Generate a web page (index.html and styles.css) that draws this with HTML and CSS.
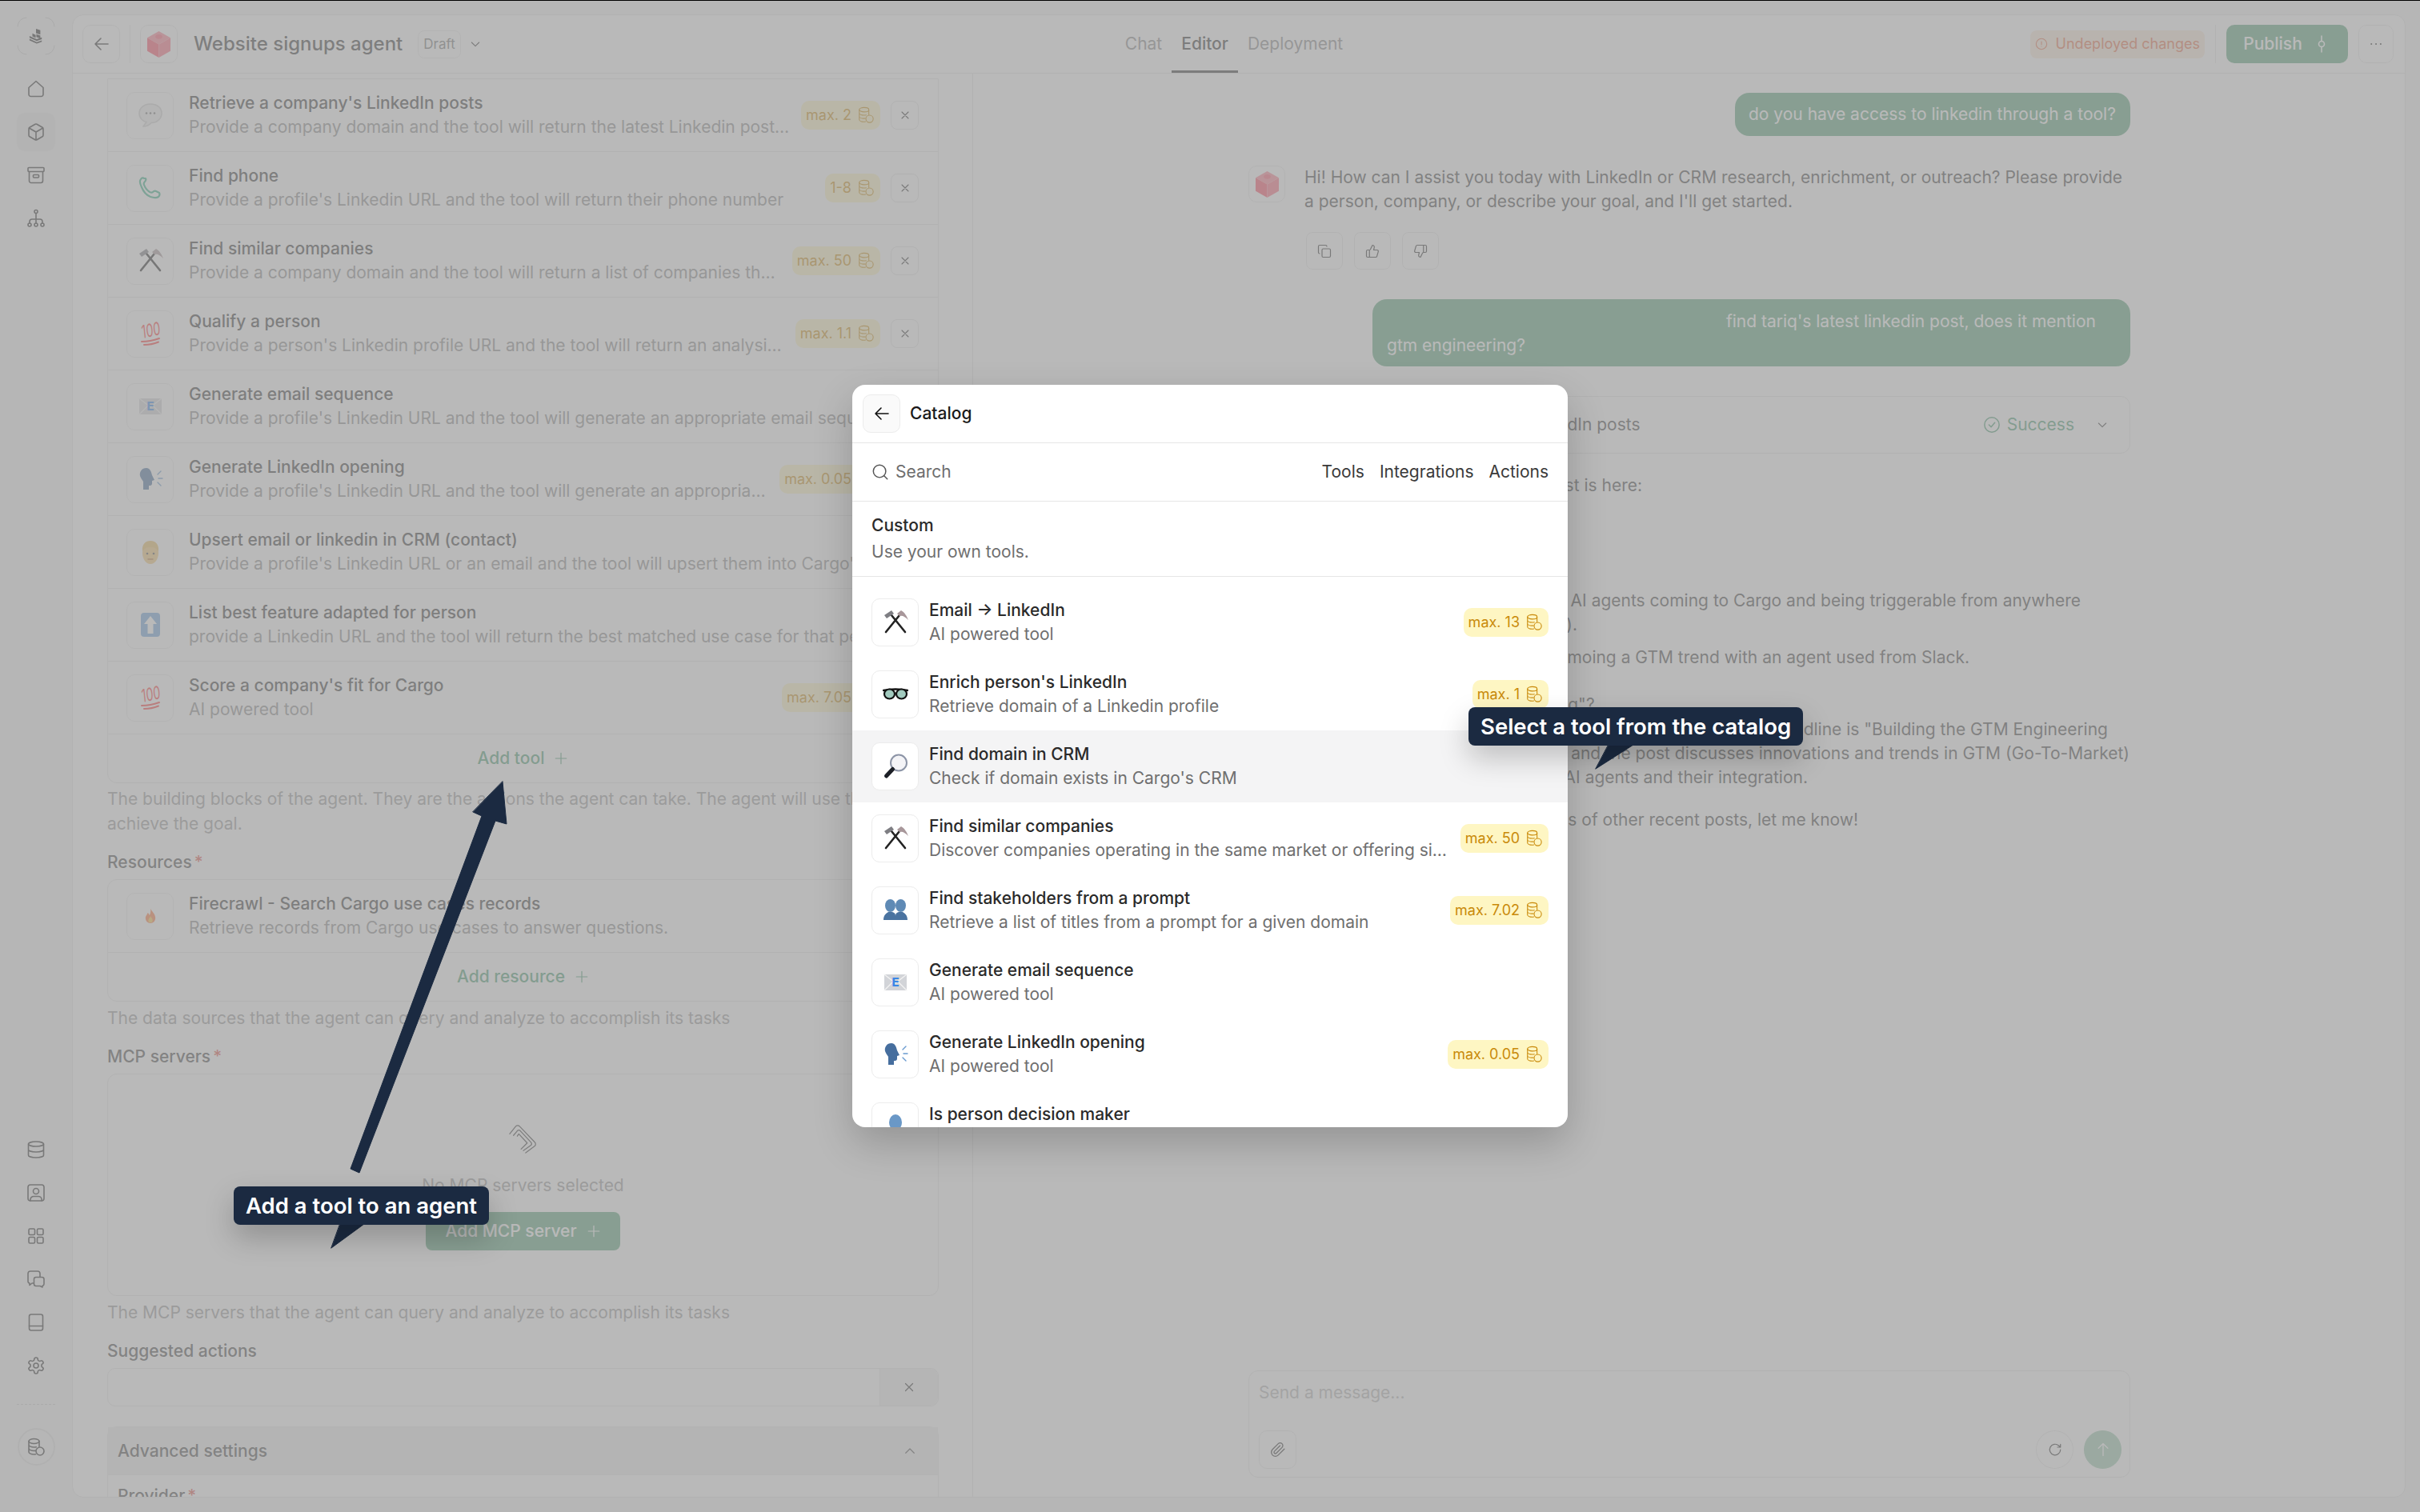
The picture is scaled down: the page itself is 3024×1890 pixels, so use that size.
FILE: index.html
```html
<!DOCTYPE html>
<html lang="en">
<head>
<meta charset="utf-8">
<title>Website signups agent</title>
<link rel="stylesheet" href="styles.css">
</head>
<body>
<svg class="defs" aria-hidden="true">
  <symbol id="back" viewBox="0 0 24 24"><path d="M20 12H4M11 19l-7-7 7-7"/></symbol>
  <symbol id="home" viewBox="0 0 24 24"><path d="M3 10.500 12 2.500l9 8V19a2.500 2.500 0 0 1-2.500 2.500h-13A2.500 2.500 0 0 1 3 19z"/></symbol>
  <symbol id="box" viewBox="0 0 24 24"><path d="M21 16V8a2 2 0 0 0-1-1.730l-7-4a2 2 0 0 0-2 0l-7 4A2 2 0 0 0 3 8v8a2 2 0 0 0 1 1.730l7 4a2 2 0 0 0 2 0l7-4A2 2 0 0 0 21 16zM3.300 7 12 12l8.700-5M12 22V12"/></symbol>
  <symbol id="archive" viewBox="0 0 24 24"><rect x="2" y="2.500" width="20" height="5" rx="1"/><path d="M3.500 7.500V19a2.500 2.500 0 0 0 2.500 2.500h12a2.500 2.500 0 0 0 2.500-2.500V7.500"/><rect x="8.500" y="11.500" width="7" height="3.500" rx="1"/></symbol>
  <symbol id="tree" viewBox="0 0 24 24"><circle cx="12" cy="3.500" r="2"/><circle cx="4" cy="20" r="2"/><circle cx="12" cy="20" r="2"/><circle cx="20" cy="20" r="2"/><path d="M12 5.500V18M4 18v-2a3 3 0 0 1 3-3h10a3 3 0 0 1 3 3v2"/></symbol>
  <symbol id="db" viewBox="0 0 24 24"><ellipse cx="12" cy="5" rx="9.500" ry="3"/><path d="M2.500 5v14c0 1.660 4.250 3 9.500 3s9.500-1.340 9.500-3V5M2.500 12c0 1.660 4.250 3 9.500 3s9.500-1.340 9.500-3"/></symbol>
  <symbol id="contact" viewBox="0 0 24 24"><rect x="2" y="2" width="20" height="20" rx="3"/><circle cx="12" cy="10" r="3.500"/><path d="M5 22v-1.500a4 4 0 0 1 4-4h6a4 4 0 0 1 4 4V22"/></symbol>
  <symbol id="grid" viewBox="0 0 24 24"><rect x="3" y="3" width="7.500" height="7.500" rx="1.500"/><rect x="13.500" y="3" width="7.500" height="7.500" rx="1.500"/><rect x="3" y="13.500" width="7.500" height="7.500" rx="1.500"/><rect x="13.500" y="13.500" width="7.500" height="7.500" rx="1.500"/></symbol>
  <symbol id="chats" viewBox="0 0 24 24"><path d="M9 17H7l-3 2.500V17a2.500 2.500 0 0 1-2-2.500V5a3 3 0 0 1 3-3h9a3 3 0 0 1 3 3v4"/><path d="M12 9.500h7.500A2.500 2.500 0 0 1 22 12v6a2.500 2.500 0 0 1-2 2.400V22l-3-1.500h-5A2.500 2.500 0 0 1 9.500 18v-6A2.500 2.500 0 0 1 12 9.500z"/></symbol>
  <symbol id="book" viewBox="0 0 24 24"><rect x="3.500" y="2" width="17" height="20" rx="2.500"/><path d="M3.500 16.500h17"/></symbol>
  <symbol id="gear" viewBox="0 0 24 24"><path d="M12.220 2h-.44a2 2 0 0 0-2 2v.18a2 2 0 0 1-1 1.730l-.43.25a2 2 0 0 1-2 0l-.15-.08a2 2 0 0 0-2.730.73l-.22.38a2 2 0 0 0 .73 2.730l.15.1a2 2 0 0 1 1 1.720v.51a2 2 0 0 1-1 1.740l-.15.09a2 2 0 0 0-.73 2.730l.22.38a2 2 0 0 0 2.730.73l.15-.08a2 2 0 0 1 2 0l.43.25a2 2 0 0 1 1 1.730V20a2 2 0 0 0 2 2h.44a2 2 0 0 0 2-2v-.18a2 2 0 0 1 1-1.730l.43-.25a2 2 0 0 1 2 0l.15.08a2 2 0 0 0 2.730-.73l.22-.39a2 2 0 0 0-.73-2.730l-.15-.08a2 2 0 0 1-1-1.740v-.5a2 2 0 0 1 1-1.740l.15-.09a2 2 0 0 0 .73-2.730l-.22-.38a2 2 0 0 0-2.730-.73l-.15.08a2 2 0 0 1-2 0l-.43-.25a2 2 0 0 1-1-1.730V4a2 2 0 0 0-2-2z"/><circle cx="12" cy="12" r="3"/></symbol>
  <symbol id="coins" viewBox="0 0 24 24"><ellipse cx="9.500" cy="4.500" rx="6.500" ry="3"/><path d="M3 4.500V18c0 1.600 2.900 3 6.500 3 .8 0 1.500-.1 2-.2M16 4.500v6.800M3 9c0 1.600 2.900 3 6.500 3 1 0 2-.1 2.800-.3M3 13.500c0 1.600 2.900 3 6.500 3 .6 0 1.200 0 1.700-.1"/><circle cx="17" cy="17" r="5"/></symbol>
  <symbol id="x" viewBox="0 0 24 24"><path d="M18 6 6 18M6 6l12 12"/></symbol>
  <symbol id="plus" viewBox="0 0 24 24"><path d="M12 3v18M3 12h18"/></symbol>
  <symbol id="down" viewBox="0 0 24 24"><path d="m5 9 7 7 7-7"/></symbol>
  <symbol id="up" viewBox="0 0 24 24"><path d="m5 15 7-7 7 7"/></symbol>
  <symbol id="search" viewBox="0 0 24 24"><circle cx="11" cy="11" r="8.500"/><path d="m21.500 21.500-4.300-4.300"/></symbol>
  <symbol id="alert" viewBox="0 0 24 24"><circle cx="12" cy="12" r="10"/><path d="M12 7.500v5.500M12 16.500v.1"/></symbol>
  <symbol id="check" viewBox="0 0 24 24"><circle cx="12" cy="12" r="10"/><path d="m8 12 3 3 5-6"/></symbol>
  <symbol id="commit" viewBox="0 0 24 24"><circle cx="12" cy="12" r="3.500"/><path d="M12 2v6.500M12 15.500V22"/></symbol>
  <symbol id="dots" viewBox="0 0 24 24"><path d="M5 12h.1M12 12h.1M19 12h.1"/></symbol>
  <symbol id="copy" viewBox="0 0 24 24"><rect x="8" y="8" width="14" height="14" rx="2"/><path d="M4 16c-1.100 0-2-.9-2-2V4c0-1.100.9-2 2-2h10c1.100 0 2 .9 2 2"/></symbol>
  <symbol id="tup" viewBox="0 0 24 24"><path d="M7 10v12M15 5.880 14 10h5.830a2 2 0 0 1 1.920 2.560l-2.330 8A2 2 0 0 1 17.500 22H4a2 2 0 0 1-2-2v-8a2 2 0 0 1 2-2h2.760a2 2 0 0 0 1.790-1.110L12 2a3.130 3.130 0 0 1 3 3.880Z"/></symbol>
  <symbol id="tdown" viewBox="0 0 24 24"><path d="M17 14V2M9 18.120 10 14H4.170a2 2 0 0 1-1.920-2.560l2.330-8A2 2 0 0 1 6.500 2H20a2 2 0 0 1 2 2v8a2 2 0 0 1-2 2h-2.760a2 2 0 0 0-1.790 1.110L12 22a3.130 3.130 0 0 1-3-3.880Z"/></symbol>
  <symbol id="clip" viewBox="0 0 24 24"><path d="m21.440 11.050-9.190 9.190a6 6 0 0 1-8.490-8.490l8.570-8.570A4 4 0 1 1 18 8.840l-8.590 8.570a2 2 0 0 1-2.830-2.830l8.490-8.480"/></symbol>
  <symbol id="mcp" viewBox="0 0 40 40"><path d="M2 13 10 3a3.500 3.500 0 0 1 5 0l20 21a3.500 3.500 0 0 1 0 5L23 38"/><path d="M7 15l5-6a3 3 0 0 1 4 0l14 15a3 3 0 0 1 0 4L20 35"/><path d="M12 16l2-3 11 12-8 8"/></symbol>
  <symbol id="rotate" viewBox="0 0 24 24"><path d="M21 12a9 9 0 1 1-3-6.700L21 8M21 3v5h-5"/></symbol>
  <symbol id="arrowup" viewBox="0 0 24 24"><path d="M12 21V3M5 10l7-7 7 7"/></symbol>
  <symbol id="logo" viewBox="0 0 20 22"><path d="M10 1 16 3V9L10 7z"/><path d="M5 7.500 9.500 9.500v4L5 11.500zM10.500 8.500 16 10.500v4l-5.500-2zM1 11 11 15.500 18 13v2.500L11 18 1 13.500zM1 15 11 19.500 18 17v2L11 21.500 1 17z"/></symbol>
  <symbol id="cube" viewBox="0 0 32 36"><path fill="#ff8494" d="M16 1 31 9.500 16 18 1 9.500z"/><path fill="#ff4f66" d="M1 9.500 16 18V35L1 26.500z"/><path fill="#ff6d80" d="M31 9.500 16 18V35L31 26.500z"/><ellipse cx="16" cy="8" rx="4.500" ry="3" fill="#ff6076"/></symbol>
  <symbol id="e-hammer" viewBox="0 0 32 32"><path d="M4 28 21 7M28 28 11 7" fill="none" stroke="#222" stroke-width="2.600" stroke-linecap="round"/><path d="M2 7 11 1l3 4-9 6z" fill="#7e7e83"/><path d="M18 5 23 1c4 2 7 7 9 12-4-4-7-6-11-5z" fill="#a8979a"/></symbol>
  <symbol id="e-glasses" viewBox="0 0 32 32"><path d="M1 11Q16 8 31 11" fill="none" stroke="#111" stroke-width="2.500"/><ellipse cx="8.500" cy="15.500" rx="6.500" ry="6" fill="#a2cbbf" stroke="#111" stroke-width="2.200"/><ellipse cx="23.500" cy="15.500" rx="6.500" ry="6" fill="#a2cbbf" stroke="#111" stroke-width="2.200"/></symbol>
  <symbol id="e-mag" viewBox="0 0 32 32"><circle cx="20" cy="11.500" r="10" fill="#f4f4f7" stroke="#8d95a7" stroke-width="2"/><path d="M12.500 19.500 4.500 28" stroke="#1c1f26" stroke-width="5" stroke-linecap="round"/></symbol>
  <symbol id="e-people" viewBox="0 0 32 32"><ellipse cx="9.500" cy="10" rx="6.500" ry="8" fill="#5f8ab5"/><ellipse cx="22.500" cy="10" rx="6.500" ry="8" fill="#5f8ab5"/><path d="M1 28c0-6 3-8 6-10h5c3 1 4 2 4 5 0-3 1-4 4-5h5c3 2 6 4 6 10z" fill="#4a73a0"/></symbol>
  <symbol id="e-mail" viewBox="0 0 32 32"><rect x="2" y="6" width="28" height="20" fill="#d2d4d8"/><path d="M2 6 16 17 30 6M2 26 13 15M30 26 19 15" fill="none" stroke="#f4f4f4" stroke-width="1.200"/><text x="16" y="21" text-anchor="middle" font-family="Inter" font-weight="800" font-size="15" fill="#3b87e6">E</text></symbol>
  <symbol id="e-speak" viewBox="0 0 32 32"><path d="M11 2C5 2 2 7 3 12c1 3 3 5 4 7v10h7v-5c2 0 4 0 4-3v-3l3-1-3-6C17 6 15 2 11 2z" fill="#466e9e"/><path d="M25 10l4-4M26 15h5M25 20l4 4" stroke="#6a9bd0" stroke-width="1.400" fill="none"/></symbol>
  <symbol id="e-bust" viewBox="0 0 32 32"><ellipse cx="16" cy="11" rx="8" ry="10" fill="#6a98c7"/><path d="M4 34c0-8 5-12 12-12s12 4 12 12z" fill="#5b88b5"/></symbol>
  <symbol id="e-bubble" viewBox="0 0 32 32"><path d="M16 2C8 2 2 7 2 13.500S7 24 11 24.500l-4 5.500c4 0 8-2 10-4.500 7 0 13-5 13-12S24 2 16 2z" fill="#ededed" stroke="#d0d0d0"/><circle cx="11" cy="13.500" r="1.300" fill="#777"/><circle cx="16" cy="13.500" r="1.300" fill="#777"/><circle cx="21" cy="13.500" r="1.300" fill="#777"/></symbol>
  <symbol id="e-phone" viewBox="0 0 32 32"><path d="M4 5c-2 2-1 6 1 10 2 5 6 10 11 12 3 1 7 2 10 0 2-2 2-3 1-5l-4-2c-2-1-3 0-4 1s-2 1-4 0c-3-2-6-6-7-9-1-2 0-3 1-4s2-2 1-4L8 4C7 3 5 3 4 5z" fill="none" stroke="#39b38a" stroke-width="2.200"/></symbol>
  <symbol id="e-100" viewBox="0 0 32 32"><text x="16" y="14" text-anchor="middle" font-family="Inter" font-style="italic" font-weight="400" font-size="16" fill="#ff3b3b" textLength="24" lengthAdjust="spacingAndGlyphs" transform="rotate(-12 16 10) scale(1 1.400)">100</text><path d="M5 26c7 0 15-1.500 22-4M8 30c6 0 12-1 18-3.500" fill="none" stroke="#ff3b3b" stroke-width="2"/></symbol>
  <symbol id="e-face" viewBox="0 0 32 32"><ellipse cx="16" cy="17" rx="10" ry="14" fill="#f5c878"/><path d="M6 15C5 6 10 2 16 2s11 4 10 13c-3-4-5-5-10-5s-7 1-10 5z" fill="#ecbf62"/><circle cx="12" cy="18" r="1.300" fill="#555"/><circle cx="20" cy="18" r="1.300" fill="#555"/><path d="M13 25h6" stroke="#b5763a" stroke-width="1.500"/></symbol>
  <symbol id="e-up" viewBox="0 0 32 32"><rect x="4" y="1" width="24" height="30" rx="4" fill="#6fa6dd"/><path d="M16 5 24 15H19.500V27h-7V15H8z" fill="#fff"/></symbol>
  <symbol id="e-fire" viewBox="0 0 32 32"><path d="M16 2c2 6 9 9 9 18a9 9 0 0 1-18 0c0-5 3-6 4-10 2 1 3 3 3 5 2-3 3-8 2-13z" fill="#ff7a3c"/><path d="M16 16c1 3 4 4 4 8a4 4 0 0 1-8 0c0-3 3-4 4-8z" fill="#ffc84a"/></symbol>
</svg>

<div class="app">
  <nav class="sidebar">
    <div class="nav-group">
      <div class="nav-item">
        <svg class="logo-corners" viewBox="0 0 48 48"><path d="M1 12A11 11 0 0 1 12 1M36 1A11 11 0 0 1 47 12M47 36A11 11 0 0 1 36 47M12 47A11 11 0 0 1 1 36"/></svg>
        <svg class="logo-mark"><use href="#logo"/></svg>
      </div>
      <div class="nav-item"><svg class="nav-icon"><use href="#home"/></svg></div>
      <div class="nav-item nav-active"><svg class="nav-icon"><use href="#box"/></svg></div>
      <div class="nav-item"><svg class="nav-icon"><use href="#archive"/></svg></div>
      <div class="nav-item"><svg class="nav-icon"><use href="#tree"/></svg></div>
    </div>
    <div class="nav-group nav-bottom">
      <div class="nav-item"><svg class="nav-icon"><use href="#db"/></svg></div>
      <div class="nav-item"><svg class="nav-icon"><use href="#contact"/></svg></div>
      <div class="nav-item"><svg class="nav-icon"><use href="#grid"/></svg></div>
      <div class="nav-item"><svg class="nav-icon"><use href="#chats"/></svg></div>
      <div class="nav-item"><svg class="nav-icon"><use href="#book"/></svg></div>
      <div class="nav-item"><svg class="nav-icon"><use href="#gear"/></svg></div>
      <div class="nav-sep"></div>
      <div class="nav-credit"><svg class="nav-icon"><use href="#coins"/></svg></div>
    </div>
  </nav>

  <main class="panel">
    <header class="topbar">
      <div class="top-left">
        <button class="square"><svg class="i24"><use href="#back"/></svg></button>
        <span class="vsep"></span>
        <span class="square"><svg class="i34"><use href="#cube"/></svg></span>
        <span class="agent-name">Website signups agent</span>
        <span class="draft">Draft</span>
        <svg class="i16 draft-chev"><use href="#down"/></svg>
      </div>
      <div class="tabs">
        <span class="tab">Chat</span>
        <span class="tab tab-on">Editor</span>
        <span class="tab">Deployment</span>
      </div>
      <div class="top-right">
        <span class="undeployed"><svg class="i16"><use href="#alert"/></svg>Undeployed changes</span>
        <span class="vsep"></span>
        <button class="publish">Publish<svg class="i24"><use href="#commit"/></svg></button>
        <button class="more"><svg class="i20"><use href="#dots"/></svg></button>
      </div>
    </header>

    <div class="panes">
      <section class="editor">
        <div class="card">
          <div class="row"><span class="emoji"><svg class="i32"><use href="#e-bubble"/></svg></span><div class="row-text"><div class="t">Retrieve a company's LinkedIn posts</div><div class="d">Provide a company domain and the tool will return the latest Linkedin posts for that company</div></div><span class="badge">max. 2<svg class="coin"><use href="#coins"/></svg></span><button class="rm"><svg class="i16"><use href="#x"/></svg></button></div>
          <div class="row"><span class="emoji"><svg class="i32"><use href="#e-phone"/></svg></span><div class="row-text"><div class="t">Find phone</div><div class="d">Provide a profile's Linkedin URL and the tool will return their phone number</div></div><span class="badge">1-8<svg class="coin"><use href="#coins"/></svg></span><button class="rm"><svg class="i16"><use href="#x"/></svg></button></div>
          <div class="row"><span class="emoji"><svg class="i32"><use href="#e-hammer"/></svg></span><div class="row-text"><div class="t">Find similar companies</div><div class="d">Provide a company domain and the tool will return a list of companies that look similar to it</div></div><span class="badge">max. 50<svg class="coin"><use href="#coins"/></svg></span><button class="rm"><svg class="i16"><use href="#x"/></svg></button></div>
          <div class="row"><span class="emoji"><svg class="i32"><use href="#e-100"/></svg></span><div class="row-text"><div class="t">Qualify a person</div><div class="d">Provide a person's Linkedin profile URL and the tool will return an analysis of the person</div></div><span class="badge">max. 1.1<svg class="coin"><use href="#coins"/></svg></span><button class="rm"><svg class="i16"><use href="#x"/></svg></button></div>
          <div class="row"><span class="emoji"><svg class="i32"><use href="#e-mail"/></svg></span><div class="row-text"><div class="t">Generate email sequence</div><div class="d">Provide a profile's Linkedin URL and the tool will generate an appropriate email sequence for them</div></div><button class="rm"><svg class="i16"><use href="#x"/></svg></button></div>
          <div class="row"><span class="emoji"><svg class="i32"><use href="#e-speak"/></svg></span><div class="row-text"><div class="t">Generate LinkedIn opening</div><div class="d">Provide a profile's Linkedin URL and the tool will generate an appropriate opening line</div></div><span class="badge">max. 0.05<svg class="coin"><use href="#coins"/></svg></span><button class="rm"><svg class="i16"><use href="#x"/></svg></button></div>
          <div class="row"><span class="emoji"><svg class="i32"><use href="#e-face"/></svg></span><div class="row-text"><div class="t">Upsert email or linkedin in CRM (contact)</div><div class="d">Provide a profile's Linkedin URL or an email and the tool will upsert them into Cargo's CRM</div></div><button class="rm"><svg class="i16"><use href="#x"/></svg></button></div>
          <div class="row"><span class="emoji"><svg class="i32"><use href="#e-up"/></svg></span><div class="row-text"><div class="t">List best feature adapted for person</div><div class="d">provide a Linkedin URL and the tool will return the best matched use case for that person</div></div><button class="rm"><svg class="i16"><use href="#x"/></svg></button></div>
          <div class="row"><span class="emoji"><svg class="i32"><use href="#e-100"/></svg></span><div class="row-text"><div class="t">Score a company's fit for Cargo</div><div class="d">AI powered tool</div></div><span class="badge">max. 7.05<svg class="coin"><use href="#coins"/></svg></span><button class="rm"><svg class="i16"><use href="#x"/></svg></button></div>
          <div class="add-row"><span class="add">Add tool<svg class="i18"><use href="#plus"/></svg></span></div>
        </div>
        <p class="help help-first">The building blocks of the agent. They are the actions the agent can take. The agent will use them to<br>achieve the goal.</p>

        <div class="label">Resources<span class="req">*</span></div>
        <div class="card">
          <div class="row row-plain"><span class="emoji"><svg class="i22"><use href="#e-fire"/></svg></span><div class="row-text"><div class="t">Firecrawl - Search Cargo use cases records</div><div class="d">Retrieve records from Cargo use cases to answer questions.</div></div></div>
          <div class="add-row"><span class="add">Add resource<svg class="i18"><use href="#plus"/></svg></span></div>
        </div>
        <p class="help">The data sources that the agent can query and analyze to accomplish its tasks</p>

        <div class="label">MCP servers<span class="req">*</span></div>
        <div class="card mcp-empty">
          <svg class="mcp-icon"><use href="#mcp"/></svg>
          <div class="mcp-none">No MCP servers selected</div>
          <button class="add-mcp">Add MCP server<svg class="i18"><use href="#plus"/></svg></button>
        </div>
        <p class="help">The MCP servers that the agent can query and analyze to accomplish its tasks</p>

        <div class="label">Suggested actions</div>
        <div class="suggest"><span class="suggest-input"></span><span class="suggest-x"><svg class="i18"><use href="#x"/></svg></span></div>

        <div class="advanced">
          <div class="adv-head"><span>Advanced settings</span><svg class="i18"><use href="#up"/></svg></div>
          <div class="adv-body"><span class="adv-label">Provider<span class="req">*</span></span></div>
        </div>
      </section>

      <section class="chat">
        <div class="thread">
          <div class="bubble bubble-one">do you have access to linkedin through a tool?</div>
          <div class="assistant">
            <span class="avatar"><svg class="i34"><use href="#cube"/></svg></span>
            <div class="assistant-main">
              <p class="says">Hi! How can I assist you today with LinkedIn or CRM research, enrichment, or outreach? Please provide a person, company, or describe your goal, and I'll get started.</p>
              <div class="acts">
                <button class="act"><svg class="i18"><use href="#copy"/></svg></button>
                <button class="act"><svg class="i18"><use href="#tup"/></svg></button>
                <button class="act"><svg class="i18"><use href="#tdown"/></svg></button>
              </div>
            </div>
          </div>
          <div class="bubble bubble-two">find tariq's latest linkedin post, does it mention gtm engineering?</div>
          <div class="tool-call">
            <span class="tool-name">Retrieve a company's LinkedIn posts</span>
            <span class="tool-status"><svg class="i22"><use href="#check"/></svg>Success</span>
            <svg class="i16 tool-chev"><use href="#down"/></svg>
          </div>
          <div class="answer">
            <p class="ln l1">Tariq's latest LinkedIn post is here:</p>
            <p class="ln l2">The post is about AI agents coming to Cargo and being triggerable from anywhere</p>
            <p class="ln l3">(like Slack).</p>
            <p class="ln l4">He is also promoing a GTM trend with an agent used from Slack.</p>
            <p class="ln l5">Does it mention "GTM engineering"?</p>
            <p class="ln l6">Yes, the headline is "Building the GTM Engineering</p>
            <p class="ln l7">Stack", and the post discusses innovations and trends in GTM (Go-To-Market)</p>
            <p class="ln l8">engineering, focused on AI agents and their integration.</p>
            <p class="ln l9">If you'd like details of other recent posts, let me know!</p>
          </div>
        </div>
        <div class="composer">
          <div class="placeholder">Send a message...</div>
          <div class="composer-bar">
            <button class="attach"><svg class="i20"><use href="#clip"/></svg></button>
            <span class="bar-right">
              <button class="round"><svg class="i18"><use href="#rotate"/></svg></button>
              <button class="round send"><svg class="i20"><use href="#arrowup"/></svg></button>
            </span>
          </div>
        </div>
      </section>
    </div>
  </main>
</div>

<div class="overlay">
  <div class="modal">
    <div class="m-head"><button class="m-back"><svg class="i24"><use href="#back"/></svg></button><span class="m-title">Catalog</span></div>
    <div class="m-search">
      <svg class="i22 m-search-ic"><use href="#search"/></svg>
      <span class="m-search-text">Search</span>
      <span class="m-filters"><span>Tools</span><span>Integrations</span><span>Actions</span></span>
    </div>
    <div class="m-custom"><div class="mt">Custom</div><div class="md">Use your own tools.</div></div>
    <div class="m-list">
      <div class="m-row"><span class="m-emoji"><svg class="i32"><use href="#e-hammer"/></svg></span><div class="m-text"><div class="mt">Email → LinkedIn</div><div class="md">AI powered tool</div></div><span class="badge">max. 13<svg class="coin"><use href="#coins"/></svg></span></div>
      <div class="m-row"><span class="m-emoji"><svg class="i32"><use href="#e-glasses"/></svg></span><div class="m-text"><div class="mt">Enrich person's LinkedIn</div><div class="md">Retrieve domain of a Linkedin profile</div></div><span class="badge">max. 1<svg class="coin"><use href="#coins"/></svg></span></div>
      <div class="m-row m-hover"><span class="m-emoji"><svg class="i32"><use href="#e-mag"/></svg></span><div class="m-text"><div class="mt">Find domain in CRM</div><div class="md">Check if domain exists in Cargo's CRM</div></div></div>
      <div class="m-row"><span class="m-emoji"><svg class="i32"><use href="#e-hammer"/></svg></span><div class="m-text"><div class="mt">Find similar companies</div><div class="md">Discover companies operating in the same market or offering similar products</div></div><span class="badge">max. 50<svg class="coin"><use href="#coins"/></svg></span></div>
      <div class="m-row"><span class="m-emoji"><svg class="i32"><use href="#e-people"/></svg></span><div class="m-text"><div class="mt">Find stakeholders from a prompt</div><div class="md">Retrieve a list of titles from a prompt for a given domain</div></div><span class="badge">max. 7.02<svg class="coin"><use href="#coins"/></svg></span></div>
      <div class="m-row"><span class="m-emoji"><svg class="i32"><use href="#e-mail"/></svg></span><div class="m-text"><div class="mt">Generate email sequence</div><div class="md">AI powered tool</div></div></div>
      <div class="m-row"><span class="m-emoji"><svg class="i32"><use href="#e-speak"/></svg></span><div class="m-text"><div class="mt">Generate LinkedIn opening</div><div class="md">AI powered tool</div></div><span class="badge">max. 0.05<svg class="coin"><use href="#coins"/></svg></span></div>
      <div class="m-row"><span class="m-emoji"><svg class="i32"><use href="#e-bust"/></svg></span><div class="m-text"><div class="mt">Is person decision maker</div><div class="md">AI powered tool</div></div></div>
    </div>
  </div>
</div>

<svg class="marks" viewBox="0 0 3024 1890" aria-hidden="true">
  <polygon class="mark-shape" points="628,977 633,1030 619,1026 449,1466 438,1461 602,1020 591,1015"/>
  <polygon class="mark-shape" points="425,1530 455,1530 414,1560"/>
  <polygon class="mark-shape" points="2010,931 2041,931 1994,961"/>
</svg>
<div class="tip tip-one">Add a tool to an agent</div>
<div class="tip tip-two">Select a tool from the catalog</div>
</body>
</html>
```

FILE: styles.css
```css
* { box-sizing: border-box; }
html, body { margin: 0; padding: 0; }
body {
  width: 3024px;
  height: 1890px;
  overflow: hidden;
  position: relative;
  background: #f6f6f6;
  font-family: Inter, "Liberation Sans", sans-serif;
  font-size: 21px;
  line-height: 30px;
  color: #1f1f1f;
}
p { margin: 0; }
button { font: inherit; background: none; border: 0; padding: 0; color: inherit; }
svg { fill: none; stroke: currentColor; stroke-width: 1.6; stroke-linecap: round; stroke-linejoin: round; flex: none; }
.defs { position: absolute; width: 0; height: 0; }
.i16 { width: 16px; height: 16px; }
.i18 { width: 18px; height: 18px; }
.i20 { width: 20px; height: 20px; }
.i22 { width: 22px; height: 22px; }
.i24 { width: 24px; height: 24px; }
.i32 { width: 32px; height: 32px; stroke: none; }
.i34 { width: 31px; height: 35px; stroke: none; }
.emoji .i22 { stroke: none; }

.app { display: flex; height: 1890px; padding: 18px 18px 18px 0; }

/* sidebar */
.sidebar { width: 90px; flex: none; display: flex; flex-direction: column; justify-content: space-between; align-items: center; padding: 3px 0 40px; color: #2a2a2a; }
.nav-group { display: flex; flex-direction: column; gap: 6px; align-items: center; }
.nav-group .nav-item:first-child { margin-bottom: 12px; }
.nav-bottom .nav-item:first-child { margin-bottom: 0; }
.nav-item { width: 48px; height: 48px; border-radius: 10px; position: relative; display: flex; align-items: center; justify-content: center; }
.nav-active { background: #e9e9e9; }
.nav-icon { width: 24px; height: 24px; }
.logo-corners { position: absolute; inset: 0; width: 48px; height: 48px; stroke: #ccc; stroke-width: 1; }
.logo-mark { width: 18px; height: 20px; fill: #222; stroke: none; }
.nav-sep { width: 48px; border-top: 1px dashed #cfcfcf; margin: 18px 0 23px; }
.nav-credit { width: 47px; height: 47px; border-radius: 50%; border: 2px solid #e2e2e2; display: flex; align-items: center; justify-content: center; }

/* panel */
.panel { flex: 1; min-width: 0; display: flex; flex-direction: column; background: #fff; border: 1px solid #e4e4e4; border-radius: 14px; overflow: hidden; }
.topbar { height: 73px; flex: none; display: grid; grid-template-columns: 1fr auto 1fr; align-items: stretch; padding: 0 14px 0 12px; border-bottom: 1px solid #e4e4e4; }
.top-left { display: flex; align-items: center; }
.square { width: 47px; height: 48px; border: 1px solid #e8e8e8; border-radius: 10px; display: flex; align-items: center; justify-content: center; color: #2a2a2a; }
.vsep { width: 1px; height: 48px; background: #e8e8e8; margin: 0 12px; }
.agent-name { font-size: 24px; font-weight: 500; margin: 0 19px 0 20px; color: #3a3a3a; }
.draft { height: 35px; padding: 0 6px; border: 1px solid #ececec; border-radius: 8px; font-size: 17px; line-height: 33px; color: #777; }
.draft-chev { margin-left: 10px; color: #333; }
.tabs { display: flex; margin-left: -10px; }
.tab { position: relative; padding: 0 12px; display: flex; align-items: center; color: #8a8a8a; }
.tab-on { color: #333; font-weight: 500; }
.tab-on::after { content: ""; position: absolute; left: 0; right: 0; bottom: 0; height: 3px; background: #333; }
.top-right { display: flex; align-items: center; justify-content: flex-end; }
.undeployed { height: 35px; padding: 0 6px; background: #fce9da; border-radius: 8px; color: #e87048; font-size: 18px; display: flex; align-items: center; gap: 10px; }
.top-right .vsep { margin: 0 13px; }
.publish { width: 152px; height: 48px; background: #5da67d; border-radius: 10px; color: #fff; font-weight: 500; display: flex; align-items: center; justify-content: center; gap: 12px; }
.more { width: 44px; height: 48px; margin-left: 13px; border: 1px solid #e8e8e8; border-radius: 10px; display: flex; align-items: center; justify-content: center; color: #2a2a2a; }
.more svg { stroke-width: 2.4; }

.panes { flex: 1; min-height: 0; display: flex; }

/* editor column */
.editor { width: 1125px; flex: none; padding: 6px 42px 0 43px; overflow: hidden; border-right: 1px solid #e4e4e4; }
.card { border: 1px solid #e6e6e6; border-radius: 12px; }
.editor > .card:first-child { border-top-left-radius: 0; border-top-right-radius: 0; }
.row { height: 91px; display: flex; align-items: center; padding: 0 24px 0 23px; border-bottom: 1px solid #e6e6e6; }
.row-plain { padding-right: 24px; }
.emoji { width: 59px; height: 59px; flex: none; border: 1px solid #ebebeb; border-radius: 10px; display: flex; align-items: center; justify-content: center; margin-right: 19px; }
.row-text { flex: 1; min-width: 0; }
.t { color: #3a3a3a; font-weight: 500; white-space: nowrap; overflow: hidden; text-overflow: ellipsis; }
.d { color: #8d8d8d; white-space: nowrap; overflow: hidden; text-overflow: ellipsis; }
.badge { height: 36px; flex: none; margin-left: 12px; padding: 0 7px 0 6px; background: #fef6c3; color: #c98a0a; border-radius: 10px; font-size: 18px; display: flex; align-items: center; gap: 7px; }
.coin { width: 22px; height: 22px; stroke-width: 1.2; }
.rm { width: 35px; height: 36px; flex: none; margin-left: 13px; border: 1px solid #e4e4e4; border-radius: 8px; display: flex; align-items: center; justify-content: center; color: #2a2a2a; }
.add-row { height: 60px; display: flex; align-items: center; justify-content: center; }
.add { display: flex; align-items: center; gap: 12px; color: #4c9d74; font-weight: 500; }
.help { margin-top: 5px; color: #9a9a9a; line-height: 31px; }
.help-first { margin-top: 4px; }
.label { margin: 18px 0 6px; color: #4a4a4a; font-weight: 500; }
.req { color: #e2574c; margin-left: 3px; }
.mcp-empty { height: 278px; display: flex; flex-direction: column; align-items: center; padding-top: 62px; }
.mcp-icon { width: 38px; height: 38px; color: #3a3a3a; stroke-width: 1.3; }
.mcp-none { margin-top: 24px; color: #9a9a9a; }
.add-mcp { margin-top: 18px; width: 243px; height: 48px; border-radius: 8px; background: #5da67d; color: #fff; font-weight: 500; display: flex; align-items: center; justify-content: center; gap: 12px; }
.suggest { height: 48px; display: flex; border: 1px solid #e6e6e6; border-radius: 10px; overflow: hidden; }
.suggest-input { flex: 1; }
.suggest-x { width: 73px; background: #f2f2f2; border-left: 1px solid #e6e6e6; display: flex; align-items: center; justify-content: center; color: #2a2a2a; }
.advanced { margin-top: 25px; border: 1px solid #e6e6e6; border-radius: 12px 12px 0 0; }
.adv-head { height: 60px; display: flex; align-items: center; justify-content: space-between; padding: 0 26px 0 12px; background: #efefef; border-bottom: 1px solid #e6e6e6; color: #4a4a4a; font-weight: 500; }
.adv-body { padding: 11px 12px; }
.adv-label { color: #4a4a4a; font-weight: 500; }

/* chat column */
.chat { flex: 1; min-width: 0; display: flex; flex-direction: column; align-items: center; padding: 24px 0 24px 1px; }
.thread { width: 1102px; flex: 1; min-height: 0; display: flex; flex-direction: column; align-items: flex-end; overflow: hidden; }
.bubble { background: #5da67d; color: #fff; border-radius: 18px; }
.bubble-one { width: 494px; height: 54px; padding: 12px 17px; white-space: nowrap; }
.assistant { width: 100%; display: flex; margin-top: 37px; }
.avatar { width: 46px; height: 46px; flex: none; border: 1px solid #e8e8e8; border-radius: 10px; margin-right: 24px; display: flex; align-items: center; justify-content: center; }
.assistant-main { flex: 1; min-width: 0; }
.says { color: #444; }
.acts { display: flex; gap: 14px; margin-top: 23px; padding-left: 2px; }
.act { width: 46px; height: 47px; border: 1px solid #e8e8e8; border-radius: 8px; display: flex; align-items: center; justify-content: center; color: #2a2a2a; }
.bubble-two { width: 947px; height: 84px; margin-top: 37px; padding: 13px 18px; text-indent: 424px; }
.tool-call { width: 1032px; height: 72px; flex: none; margin-top: 37px; border: 1px solid #e6e6e6; border-radius: 12px; display: flex; align-items: center; padding: 0 26px 0 55px; }
.tool-name { flex: 1; color: #444; }
.tool-status { display: flex; align-items: center; gap: 8px; color: #4c9d74; margin-right: 27px; }
.tool-chev { color: #333; }
.answer { width: 1032px; }
.ln { color: #444; text-align: right; white-space: nowrap; }
.l1 { margin-top: 25px; padding-right: 610px; }
.l2 { margin-top: 114px; padding-right: 62px; }
.l3 { padding-right: 691px; }
.l4 { margin-top: 11px; padding-right: 201px; }
.l5 { margin-top: 29px; padding-right: 670px; }
.l6 { margin-top: 1px; padding-right: 28px; }
.l7 { padding-right: 1px; }
.l8 { padding-right: 403px; }
.l9 { margin-top: 23px; padding-right: 340px; }
.composer { width: 1102px; height: 134px; flex: none; margin-top: 20px; border: 1px solid #e6e6e6; border-radius: 12px; padding: 12px 10px 10px 12px; display: flex; flex-direction: column; justify-content: space-between; }
.placeholder { color: #b5b5b5; }
.composer-bar { display: flex; justify-content: space-between; align-items: center; }
.bar-right { display: flex; gap: 13px; }
.attach { width: 47px; height: 48px; border: 1px solid #e8e8e8; border-radius: 10px; display: flex; align-items: center; justify-content: center; color: #2a2a2a; }
.round { width: 47px; height: 48px; border: 1px solid #e8e8e8; border-radius: 50%; display: flex; align-items: center; justify-content: center; color: #2a2a2a; }
.send { background: #9ac9ae; border-color: #9ac9ae; color: #fff; }

/* dim + modal */
.overlay { position: absolute; inset: 0; background: rgba(155, 155, 155, .7); display: flex; align-items: center; justify-content: center; }
.overlay::before { content: ""; position: absolute; left: 0; right: 0; top: 0; height: 1px; background: #000; }
.modal { width: 894px; height: 928px; background: #fff; border-radius: 16px; overflow: hidden; display: flex; flex-direction: column; box-shadow: 0 20px 50px rgba(0, 0, 0, .2); }
.m-head { height: 73px; flex: none; display: flex; align-items: center; gap: 12px; padding-left: 13px; border-bottom: 1px solid #e6e6e6; }
.m-back { width: 47px; height: 48px; border: 1px solid #ececec; border-radius: 10px; background: #fafafa; display: flex; align-items: center; justify-content: center; color: #111; }
.m-title { font-weight: 500; color: #1a1a1a; }
.m-search { height: 73px; flex: none; display: flex; align-items: center; padding: 0 24px; border-bottom: 1px solid #e6e6e6; }
.m-search-ic { color: #555; margin-right: 8px; }
.m-search-text { flex: 1; color: #6e6e6e; }
.m-filters { display: flex; gap: 19px; color: #3a3a3a; }
.m-custom { height: 94px; flex: none; padding: 15px 24px 0; border-bottom: 1px solid #e6e6e6; }
.m-custom .md { margin-top: 3px; }
.mt { color: #2a2a2a; font-weight: 500; white-space: nowrap; overflow: hidden; text-overflow: ellipsis; }
.md { color: #6f6f6f; white-space: nowrap; overflow: hidden; text-overflow: ellipsis; }
.m-list { flex: 1; min-height: 0; overflow: hidden; padding-top: 12px; }
.m-row { height: 90px; display: flex; align-items: center; padding: 0 24px; }
.m-hover { background: #f4f4f5; }
.m-emoji { width: 59px; height: 60px; flex: none; border: 1px solid #ececec; border-radius: 10px; background: #fff; display: flex; align-items: center; justify-content: center; margin-right: 13px; }
.m-text { flex: 1; min-width: 0; }

/* guide annotations */
.marks { position: absolute; inset: 0; width: 3024px; height: 1890px; stroke: none; pointer-events: none; }
.mark-shape { fill: #1b2a41; stroke: #1b2a41; stroke-width: 1; }
.tip { position: absolute; height: 48px; padding: 0 15px; background: #1b2a41; color: #fff; border-radius: 8px; font-size: 27.5px; font-weight: 600; line-height: 48px; white-space: nowrap; box-shadow: 0 16px 36px rgba(0, 0, 0, .22); }
.tip-one { left: 292px; top: 1483px; }
.tip-two { left: 1835px; top: 884px; }
```
